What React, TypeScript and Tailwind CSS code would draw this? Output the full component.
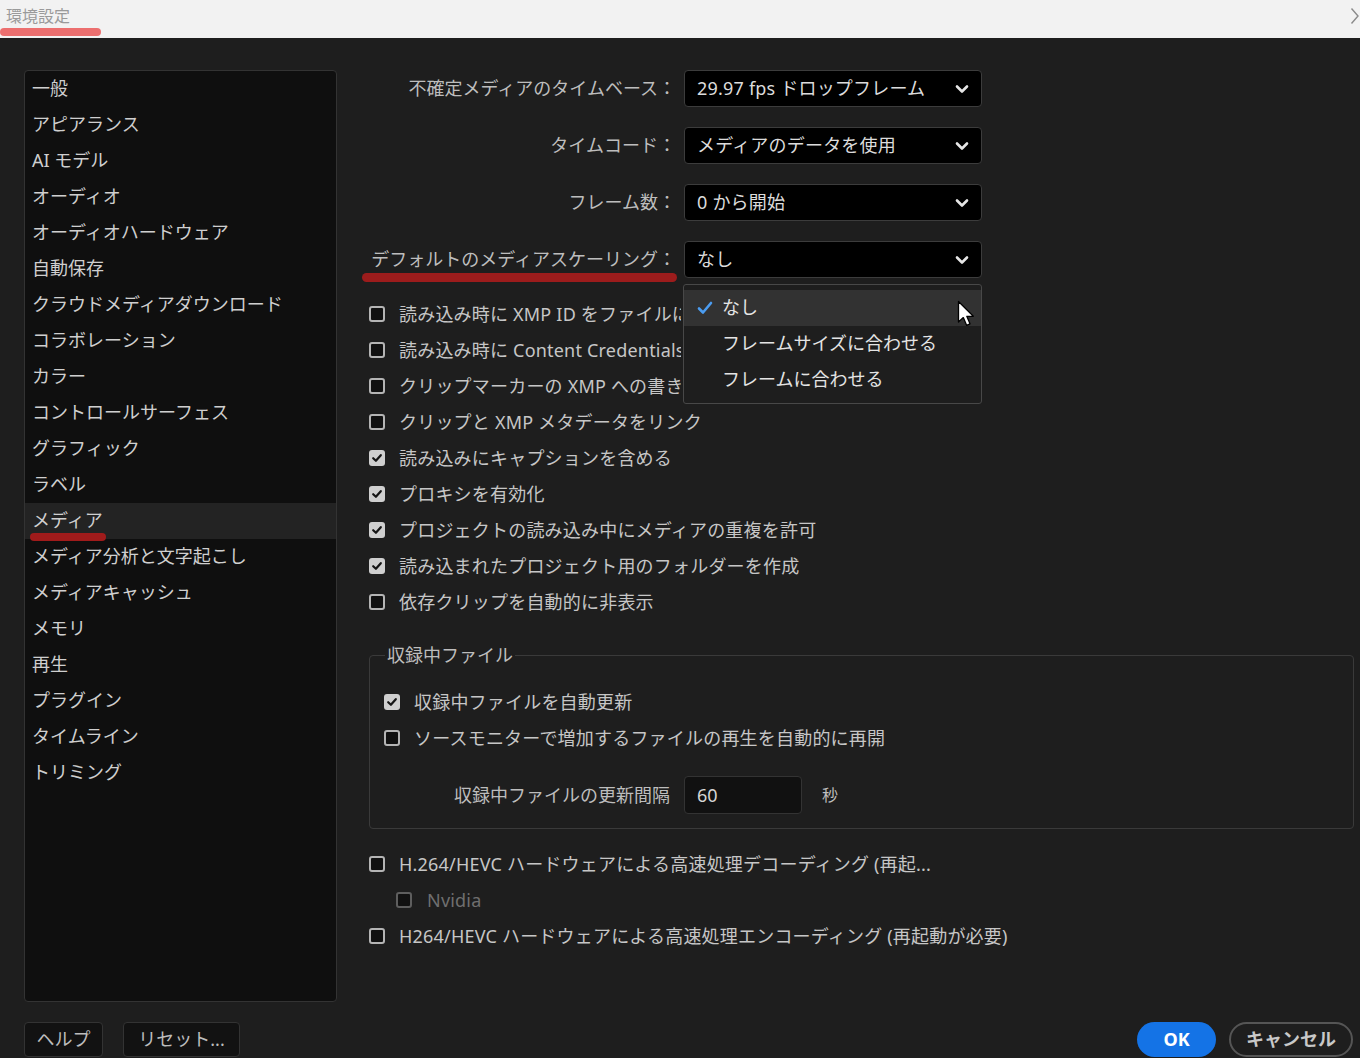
import * as React from 'react'

const FONT = { fontFamily: '"Noto Sans", "Noto Sans CJK JP", sans-serif' }

const sideItems = [
  '一般',
  'アピアランス',
  'AI モデル',
  'オーディオ',
  'オーディオハードウェア',
  '自動保存',
  'クラウドメディアダウンロード',
  'コラボレーション',
  'カラー',
  'コントロールサーフェス',
  'グラフィック',
  'ラベル',
  'メディア',
  'メディア分析と文字起こし',
  'メディアキャッシュ',
  'メモリ',
  '再生',
  'プラグイン',
  'タイムライン',
  'トリミング',
]

function Chevron() {
  return (
    <svg width="14" height="10" viewBox="0 0 14 10" className="shrink-0">
      <path d="M2 2.5 L7 7.5 L12 2.5" fill="none" stroke="#e6e6e6" strokeWidth="2.6" strokeLinecap="round" strokeLinejoin="round" />
    </svg>
  )
}

function Box({ checked = false, dim = false }: { checked?: boolean; dim?: boolean }) {
  if (checked) {
    return (
      <span className="flex h-4 w-4 shrink-0 items-center justify-center rounded-[3px] bg-[#cfcfcf]">
        <svg width="12" height="12" viewBox="0 0 12 12">
          <path d="M2.2 6.2 L4.9 8.8 L9.8 3.2" fill="none" stroke="#151515" strokeWidth="2.2" strokeLinecap="round" strokeLinejoin="round" />
        </svg>
      </span>
    )
  }
  return (
    <span
      className={
        dim
          ? 'h-4 w-4 shrink-0 rounded-[3px] border-2 border-[#5e5e5e] bg-[#111]'
          : 'h-4 w-4 shrink-0 rounded-[3px] border-2 border-[#b4b4b4] bg-[#111]'
      }
    />
  )
}

function CheckRow({ label, checked, dim, indent, clip }: { label: string; checked?: boolean; dim?: boolean; indent?: boolean; clip?: boolean }) {
  let text = 'whitespace-nowrap pb-px text-[18px] tracking-[0.2px] text-[#c6c6c6]'
  if (dim) text = 'whitespace-nowrap pb-px text-[18px] tracking-[0.2px] text-[#6f6f6f]'
  if (clip) text = 'max-w-[282px] overflow-hidden whitespace-nowrap pb-px text-[18px] tracking-[0.2px] text-[#c6c6c6]'
  return (
    <div className={indent ? 'flex h-9 items-center gap-[15px] pl-[27px]' : 'flex h-9 items-center gap-[14px]'}>
      <Box checked={checked} dim={dim} />
      <span className={text}>{label}</span>
    </div>
  )
}

function SelectRow({ label, value, children }: { label: string; value: string; children?: React.ReactNode }) {
  return (
    <div className="flex items-center">
      <div className="w-[307px] whitespace-nowrap pb-px text-right text-[18px] text-[#bdbdbd]">{label}</div>
      <div className="relative ml-[8px]">
        <div className="flex h-[37px] w-[298px] items-center justify-between rounded-[4px] border border-[#3c3c3c] bg-black pl-[12px] pr-[12px]">
          <span className="whitespace-nowrap pb-px text-[18px] tracking-[0.2px] text-[#dcdcdc]">{value}</span>
          <Chevron />
        </div>
        {children}
      </div>
    </div>
  )
}

export default function App() {
  return (
    <div className="relative h-[1058px] w-[1360px] overflow-hidden bg-[#1e1e1e] leading-[24px]" style={FONT}>
      {/* title bar */}
      <div className="relative flex h-[38px] items-start bg-[#f2f2f2] pl-[6px] pt-[4px]">
        <span className="text-[16px] text-[#9a9a9a]">環境設定</span>
        <div className="absolute left-0 top-[28px] h-[8px] w-[101px] rounded-full bg-[#ec6f6f]" />
        <svg width="10" height="18" viewBox="0 0 10 18" className="absolute right-0 top-[7px]">
          <path d="M1.5 1.5 L8 9 L1.5 16.5" fill="none" stroke="#8a8a8a" strokeWidth="1.4" />
        </svg>
      </div>

      <div className="flex items-start pl-6 pr-[6px] pt-[32px]">
        {/* sidebar */}
        <div className="relative h-[932px] w-[313px] shrink-0 rounded-[4px] border border-[#333] bg-[#0f0f0f]">
          {sideItems.map((item) => (
            <div
              key={item}
              className={
                item === 'メディア'
                  ? 'flex h-9 items-center bg-[#232323] pb-[2px] pl-[7px] text-[18px] text-[#cfcfcf]'
                  : 'flex h-9 items-center pb-[2px] pl-[7px] text-[18px] text-[#cfcfcf]'
              }
            >
              {item}
            </div>
          ))}
          <div className="absolute left-[5px] top-[462px] h-[8px] w-[76px] rounded-full bg-[#a01b1b]" />
        </div>

        {/* content */}
        <div className="relative ml-[32px] flex-1">
          <div className="flex flex-col gap-[20px]">
            <SelectRow label="不確定メディアのタイムベース：" value="29.97 fps ドロップフレーム" />
            <SelectRow label="タイムコード：" value="メディアのデータを使用" />
            <SelectRow label="フレーム数：" value="0 から開始" />
            <SelectRow label="デフォルトのメディアスケーリング：" value="なし">
              {/* dropdown menu */}
              <div className="absolute left-[-1px] top-[43px] z-10 w-[299px] rounded-[3px] border border-[#484848] bg-[#1e1e1e] pb-[5px] pt-[5px]">
                <div className="relative flex h-9 items-center bg-[#323232] pl-[13px]">
                  <svg width="16" height="14" viewBox="0 0 16 14" className="shrink-0">
                    <path d="M2 7.5 L6 11.5 L14 2" fill="none" stroke="#4b9cf0" strokeWidth="2.6" strokeLinecap="round" strokeLinejoin="round" />
                  </svg>
                  <span className="ml-[9px] pb-[2px] text-[18px] text-[#e4e4e4]">なし</span>
                  <svg width="20" height="28" viewBox="0 0 20 28" className="absolute left-[273px] top-[10px]">
                    <path d="M1.5 1.5 L1.5 22 L6.3 17.6 L9.6 25.3 L13 23.8 L9.8 16.3 L16.3 16.3 Z" fill="#ffffff" stroke="#000" strokeWidth="1.3" strokeLinejoin="round" />
                  </svg>
                </div>
                <div className="flex h-9 items-center pb-[2px] pl-[38px] text-[18px] text-[#e4e4e4]">フレームサイズに合わせる</div>
                <div className="flex h-9 items-center pb-[2px] pl-[38px] text-[18px] text-[#e4e4e4]">フレームに合わせる</div>
              </div>
            </SelectRow>
          </div>
          <div className="absolute left-[-7px] top-[203px] h-[9px] w-[315px] rounded-full bg-[#9c1c1c]" />

          <div className="mt-[18px]">
            <CheckRow label="読み込み時に XMP ID をファイルに書き込み" clip />
            <CheckRow label="読み込み時に Content Credentials を書き込み" clip />
            <CheckRow label="クリップマーカーの XMP への書き込み" clip />
            <CheckRow label="クリップと XMP メタデータをリンク" />
            <CheckRow label="読み込みにキャプションを含める" checked />
            <CheckRow label="プロキシを有効化" checked />
            <CheckRow label="プロジェクトの読み込み中にメディアの重複を許可" checked />
            <CheckRow label="読み込まれたプロジェクト用のフォルダーを作成" checked />
            <CheckRow label="依存クリップを自動的に非表示" />
          </div>

          <fieldset className="mt-[23px] rounded-[4px] border border-[#3a3a3a] px-[14px] pb-[14px] pt-[17px]">
            <legend className="ml-[1px] px-[2px] text-[18px] text-[#bdbdbd]">収録中ファイル</legend>
            <CheckRow label="収録中ファイルを自動更新" checked />
            <CheckRow label="ソースモニターで増加するファイルの再生を自動的に再開" />
            <div className="mt-[20px] flex items-center">
              <div className="w-[286px] whitespace-nowrap pb-px text-right text-[18px] text-[#bdbdbd]">収録中ファイルの更新間隔</div>
              <div className="ml-[14px] flex h-[38px] w-[118px] items-center rounded-[4px] border border-[#333] bg-[#111] pb-px pl-[12px] text-[18px] text-[#d6d6d6]">
                60
              </div>
              <span className="ml-[20px] pb-px text-[16px] text-[#bdbdbd]">秒</span>
            </div>
          </fieldset>

          <div className="mt-[17px]">
            <CheckRow label="H.264/HEVC ハードウェアによる高速処理デコーディング (再起..." />
            <CheckRow label="Nvidia" dim indent />
            <CheckRow label="H264/HEVC ハードウェアによる高速処理エンコーディング (再起動が必要)" />
          </div>
        </div>
      </div>

      {/* bottom buttons */}
      <div className="mt-[20px] flex items-center justify-between pl-6 pr-[7px]">
        <div className="flex gap-[20px]">
          <div className="flex h-[35px] w-[79px] items-center justify-center rounded-[4px] border border-[#333] bg-[#121212] pb-[2px] text-[18px] text-[#bdbdbd]">
            ヘルプ
          </div>
          <div className="flex h-[35px] w-[117px] items-center justify-center rounded-[4px] border border-[#333] bg-[#121212] pb-[2px] text-[18px] text-[#bdbdbd]">
            リセット...
          </div>
        </div>
        <div className="flex gap-[13px]">
          <div className="flex h-[35px] w-[79px] items-center justify-center rounded-full bg-[#1473e6] pb-[2px] text-[18px] font-bold text-white">
            OK
          </div>
          <div className="flex h-[35px] w-[124px] items-center justify-center rounded-full border-2 border-[#555] pb-[2px] text-[18px] font-bold text-[#c8c8c8]">
            キャンセル
          </div>
        </div>
      </div>
    </div>
  )
}
